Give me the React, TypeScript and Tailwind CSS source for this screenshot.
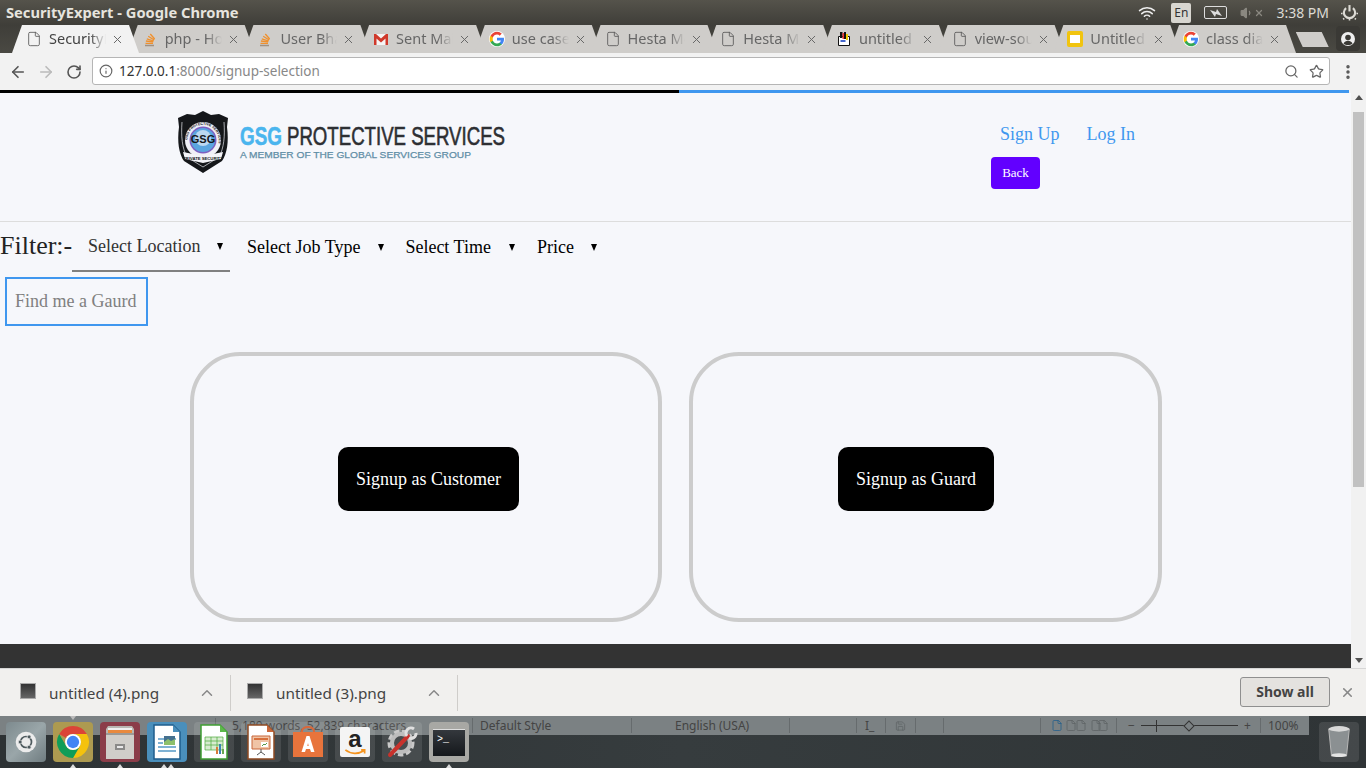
import { ArrowLeft, ArrowRight, ChevronUp, EllipsisVertical, File, Info, RotateCw, Save, Search, Star, Volume1, Wifi, X } from 'lucide-react';
import type { ReactNode } from 'react';

function GoogleIcon() {
  return (
    <div className="w-4 h-4 rounded-full bg-white flex items-center justify-center shrink-0">
      <svg viewBox="0 0 24 24" className="w-4 h-4">
        <path fill="#4285F4" d="M22.5 12.2c0-.8-.1-1.500-.2-2.200H12v4.200h5.900c-.3 1.400-1 2.500-2.200 3.300v2.700h3.500c2.100-1.900 3.300-4.700 3.300-8z" />
        <path fill="#34A853" d="M12 23c3 0 5.400-1 7.200-2.700l-3.500-2.700c-1 .7-2.200 1.100-3.700 1.100-2.800 0-5.300-1.900-6.100-4.500H2.300v2.800C4.100 20.500 7.800 23 12 23z" />
        <path fill="#FBBC05" d="M5.900 14.200c-.2-.7-.3-1.400-.3-2.200s.1-1.500.3-2.200V7H2.300C1.500 8.500 1 10.200 1 12s.5 3.500 1.300 5l3.600-2.800z" />
        <path fill="#EA4335" d="M12 5.400c1.600 0 3 .5 4.100 1.600l3.100-3.100C17.400 2.100 15 1 12 1 7.800 1 4.100 3.500 2.300 7l3.600 2.800c.8-2.600 3.300-4.400 6.100-4.400z" />
      </svg>
    </div>
  );
}

function StackIcon() {
  return (
    <svg viewBox="0 0 16 16" className="w-4 h-4 shrink-0" fill="none" stroke="#f0902c" strokeWidth="1.300">
      <path d="M3 14.500h9" stroke="#a09080" />
      <path d="M3.500 12.300h7.500M3.900 10l7.300.8M4.800 7.800l6.900 2.200M6.200 5.300l6 3.700M8.300 3l4.400 5" />
    </svg>
  );
}

function GmailIcon() {
  return (
    <svg viewBox="0 0 16 16" className="w-4 h-4 shrink-0">
      <path fill="#f4f4f4" d="M1 3h14v11H1z" />
      <path fill="#d0392b" d="M1 3h2l5 4.500L13 3h2v11h-2.500V7.500L8 11.500 3.500 7.500V14H1z" />
    </svg>
  );
}

function PaintIcon() {
  return (
    <svg viewBox="0 0 16 16" className="w-4 h-4 shrink-0">
      <path fill="#fff" stroke="#111" d="M2.500 5.500h11v9h-11z" />
      <path fill="#111" d="M4 1h2.500v6H4zM8 1h2v7H8z" />
      <path fill="#e33" d="M6.500 2h1.500v6H6.500z" />
      <path fill="#ec0" d="M10 3h2v6h-2z" />
      <path fill="#46c" d="M4.500 9h5v2h-5z" />
    </svg>
  );
}

function SlidesIcon() {
  return (
    <div className="w-4 h-4 rounded-[2px] bg-[#f1c40f] flex items-center justify-center shrink-0">
      <div className="w-[10px] h-2 bg-white" />
    </div>
  );
}

const plainFile = <File className="w-4 h-4 shrink-0 text-[#5a5a5a]" strokeWidth={1.3} />;

const tabs: { title: string; icon: ReactNode }[] = [
  { title: 'SecurityExpert', icon: plainFile },
  { title: 'php - How to', icon: <StackIcon /> },
  { title: 'User Bhavior', icon: <StackIcon /> },
  { title: 'Sent Mail', icon: <GmailIcon /> },
  { title: 'use case diagram', icon: <GoogleIcon /> },
  { title: 'Hesta Model', icon: plainFile },
  { title: 'Hesta Model', icon: plainFile },
  { title: 'untitled', icon: <PaintIcon /> },
  { title: 'view-source', icon: plainFile },
  { title: 'Untitled', icon: <SlidesIcon /> },
  { title: 'class diagram', icon: <GoogleIcon /> },
];

function Tab({ title, icon, active }: { title: string; icon: ReactNode; active?: boolean }) {
  return (
    <div
      className={`relative w-[127px] -mr-[11.3px] h-[28px] shrink-0 flex items-center pl-[14px] [clip-path:polygon(10px_0,117px_0,127px_100%,0_100%)] ${
        active ? 'z-10 bg-[#f2f2f2] text-[#444]' : 'bg-[#cfcdca] text-[#666]'
      }`}
    >
      {icon}
      <span className="ml-[7px] w-[57px] overflow-hidden whitespace-nowrap text-[14.500px] [mask-image:linear-gradient(to_right,black_72%,transparent)]">
        {title}
      </span>
      <X className="ml-[5px] w-[13px] h-[13px] text-[#666]" strokeWidth={1.800} />
    </div>
  );
}

function TopBar() {
  return (
    <div className="h-[25px] shrink-0 flex items-center bg-gradient-to-b from-[#55534b] to-[#3f3e39] pl-[6px] text-[#e6e4de]">
      <span className="font-bold text-[14.700px]">SecurityExpert - Google Chrome</span>
      <div className="ml-auto flex items-center pr-[8px]">
        <Wifi className="w-[18px] h-[18px] text-[#eee]" strokeWidth={2} />
        <div className="ml-[15px] w-[20px] h-[20px] bg-[#d8d6d0] rounded-[2px] text-[#333] text-[12px] flex items-center justify-center">En</div>
        <div className="ml-[13px] w-[23px] h-[13px] border border-[#ddd] rounded-[2px] flex items-center justify-center">
          <svg viewBox="0 0 12 8" className="w-[12px] h-[8px]"><path fill="#ddd" d="M0 1l6 2 1-3 5 7-6-2-1 3z" /></svg>
        </div>
        <Volume1 className="ml-[13px] w-[14px] h-[14px] text-[#8a8880]" fill="#8a8880" />
        <X className="w-[10px] h-[10px] text-[#8a8880]" strokeWidth={3} />
        <span className="ml-[12px] text-[14px] text-[#dddbd5]">3:38 PM</span>
        <svg viewBox="0 0 16 16" className="ml-[12px] w-[17px] h-[17px]" fill="none" stroke="#dddbd5" strokeWidth="2">
          <path d="M8 1v6" />
          <path d="M4.800 3.800a5.300 5.300 0 1 0 6.400 0" />
          <path strokeWidth="1.500" d="M8 13.500v2M1.500 9H0M16 9h-1.500M3 13.500l-1 1M13 13.500l1 1" />
        </svg>
      </div>
    </div>
  );
}

function TabStrip() {
  return (
    <div className="h-[28px] shrink-0 flex bg-gradient-to-b from-[#3f3e39] to-[#4a4943] pl-[12px] overflow-hidden">
      {tabs.map((tab, i) => (
        <Tab key={i} title={tab.title} icon={tab.icon} active={i === 0} />
      ))}
      <div className="ml-[11px] mt-[7px] w-[33px] h-[15px] bg-[#cfcdca] [clip-path:polygon(0_0,26px_0,33px_100%,7px_100%)]" />
      <div className="ml-[7px] mt-[1px] w-[24px] h-[25px] rounded-[4px] bg-[#3a3935] flex items-center justify-center">
        <svg viewBox="0 0 16 16" className="w-[16px] h-[16px]">
          <circle cx="8" cy="8" r="7" fill="#eee" />
          <circle cx="8" cy="6.500" r="2.800" fill="#3a3935" />
          <path fill="#3a3935" d="M3.500 12.500c1-2 2.500-2.800 4.500-2.800s3.500.8 4.500 2.800c-1.200 1-2.700 1.500-4.500 1.500s-3.300-.5-4.500-1.500z" />
        </svg>
      </div>
    </div>
  );
}

function Toolbar() {
  return (
    <div className="h-[37px] shrink-0 bg-[#f2f2f2] flex items-center">
      <ArrowLeft className="ml-[9px] w-[18px] h-[18px] text-[#555]" strokeWidth={2.200} />
      <ArrowRight className="ml-[10px] w-[18px] h-[18px] text-[#bbb]" strokeWidth={2.200} />
      <RotateCw className="ml-[11px] w-[16px] h-[16px] text-[#555]" strokeWidth={2.400} />
      <div className="ml-[10px] -mt-[1px] w-[1238px] h-[28px] bg-white border border-[#b5b5b5] rounded-[3px] flex items-center pl-[6px] pr-[5px]">
        <Info className="w-[14px] h-[14px] text-[#666]" strokeWidth={2} />
        <span className="ml-[6px] text-[13.500px] text-[#333]">127.0.0.1</span>
        <span className="text-[13.500px] text-[#888]">:8000/signup-selection</span>
        <Search className="ml-auto w-[15px] h-[15px] text-[#666]" strokeWidth={2} />
        <Star className="ml-[10px] w-[15px] h-[15px] text-[#666]" strokeWidth={2} />
      </div>
      <EllipsisVertical className="ml-[9px] w-[18px] h-[18px] text-[#555]" strokeWidth={2.600} />
    </div>
  );
}

function GsgLogo() {
  const sans = "'Liberation Sans', sans-serif";
  return (
    <svg viewBox="0 0 329 64" className="w-[329px] h-[64px] shrink-0">
      <path fill="#15171a" d="M10 4l8 1 8-4 8 4 8-1 9 4-1 9c2 15 0 27-5 34l-19 12-19-12C2 44 0 32 2 17L1 8z" />
      <path fill="none" stroke="#e6e8ee" strokeWidth="0.700" d="M5 12c-1 14 0 26 5 35l16 10 16-10c5-9 6-21 5-35" />
      <circle cx="26" cy="30" r="18" fill="#f0f0f6" />
      <circle cx="26" cy="30" r="13.500" fill="#7d5fc0" />
      <circle cx="26" cy="30" r="12" fill="#5aa5df" />
      <circle cx="26" cy="28" r="8" fill="#bcd8f0" />
      <defs>
        <path id="gsg-ring" d="M10.500 33a15.700 15.700 0 1 1 31 0" />
      </defs>
      <text fontSize="3.600" fontWeight="700" fill="#15171a" fontFamily={sans}>
        <textPath href="#gsg-ring" startOffset="3">GSG PROTECTIVE SERVICES</textPath>
      </text>
      <text x="26" y="33" textAnchor="middle" fontSize="11" fontWeight="700" fill="#15171a" fontFamily={sans}>GSG</text>
      <path fill="#f4f4f8" d="M6 42l20 4 20-4-2 7-18 4-18-4z" />
      <text x="26" y="50" textAnchor="middle" fontSize="4.200" fontWeight="700" fill="#15171a" fontFamily={sans}>PRIVATE SECURITY</text>
      <text x="63" y="35" fontSize="25" fontWeight="700" stroke="#4ab5ee" strokeWidth="0.500" fill="#4ab5ee" fontFamily={sans} textLength="42" lengthAdjust="spacingAndGlyphs">GSG</text>
      <text x="110" y="35" fontSize="25" fontWeight="400" stroke="#2d2f33" strokeWidth="0.600" fill="#2d2f33" fontFamily={sans} textLength="218" lengthAdjust="spacingAndGlyphs">PROTECTIVE SERVICES</text>
      <text x="63" y="48" fontSize="9.500" fontWeight="400" stroke="#5f8ea6" strokeWidth="0.250" fill="#5f8ea6" fontFamily={sans} textLength="231" lengthAdjust="spacingAndGlyphs">A MEMBER OF THE GLOBAL SERVICES GROUP</text>
    </svg>
  );
}

function Arrow({ className }: { className: string }) {
  return <div className={`w-0 h-0 border-x-[3.500px] border-x-transparent border-t-[7px] border-t-black ${className}`} />;
}

function SignupCard({ label, padded, width }: { label: string; padded: string; width: string }) {
  return (
    <div className={`h-[270px] border-[4px] border-[#cccccc] rounded-[50px] flex items-center justify-center ${width}`}>
      <button className={`h-[64px] -mt-[16px] bg-black text-white rounded-[10px] text-[18px] ${padded}`}>{label}</button>
    </div>
  );
}

function Page() {
  return (
    <div className="flex-1 min-h-0 flex bg-[#f6f7fb] font-['Liberation_Serif',serif]">
      <div className="w-[1351px] flex flex-col">
        <header className="h-[129px] shrink-0 border-b border-[#dddddd] flex pl-[177px] pt-[17px]">
          <GsgLogo />
          <div className="ml-[485px] w-[160px] -mt-[17px] pt-[27px]">
            <div className="ml-[9px] flex gap-[27px] text-[18px] text-[#3f97ef] leading-[28px]">
              <a>Sign Up</a>
              <a>Log In</a>
            </div>
            <button className="mt-[9px] w-[49px] h-[32px] rounded-[4px] bg-[#6200ff] text-white text-[13px]">Back</button>
          </div>
        </header>
        <div className="h-[50px] shrink-0 flex">
          <span className="text-[26px] leading-[48px] text-[#222] w-[72px] whitespace-nowrap">Filter:-</span>
          <div className="w-[158px] border-b-2 border-[#808080] flex items-start pl-[16px] pt-[12px] text-[18px] leading-[24px] text-[#333]">
            Select Location
            <Arrow className="ml-[17px] mt-[9px]" />
          </div>
          <div className="flex items-start pt-[13px] text-[18px] leading-[24px] text-black">
            <span className="ml-[17px]">Select Job Type</span>
            <Arrow className="ml-[18px] mt-[9px]" />
            <span className="ml-[21px]">Select Time</span>
            <Arrow className="ml-[18px] mt-[9px]" />
            <span className="ml-[22px]">Price</span>
            <Arrow className="ml-[17px] mt-[9px]" />
          </div>
        </div>
        <div className="ml-[5px] mt-[5px] w-[143px] h-[49px] shrink-0 border-2 border-[#3f97ef] flex items-center pl-[8px] text-[18px] text-[#808080]">
          Find me a Gaurd
        </div>
        <div className="mt-[26px] ml-[190px] flex gap-[27px]">
          <SignupCard label="Signup as Customer" padded="w-[181px] ml-[5px]" width="w-[472px]" />
          <SignupCard label="Signup as Guard" padded="w-[156px] -ml-[19px]" width="w-[473px]" />
        </div>
        <div className="mt-auto h-[24px] shrink-0 bg-[#333333]" />
      </div>
      <div className="w-[15px] flex flex-col items-center bg-[#f1f1f1]">
        <div className="mt-[2px] w-0 h-0 border-x-[4px] border-x-transparent border-b-[5px] border-b-[#505050]" />
        <div className="mt-[12px] w-[11px] h-[375px] bg-[#c1c1c1]" />
        <div className="mt-auto mb-[5px] w-0 h-0 border-x-[4px] border-x-transparent border-t-[5px] border-t-[#505050]" />
      </div>
    </div>
  );
}

function DownloadItem({ name, width, inset }: { name: string; width: string; inset: string }) {
  return (
    <div className={`h-[36px] flex items-center border-r border-[#cfcdca] ${width} ${inset}`}>
      <div className="w-[16px] h-[16px] border border-[#aaa] bg-gradient-to-b from-[#333] to-[#666] -mt-[4px] shrink-0" />
      <span className="ml-[13px] mt-[2px] w-[149px] text-[15.300px] text-[#444]">{name}</span>
      <ChevronUp className="w-[18px] h-[18px] text-[#888]" strokeWidth={2} />
    </div>
  );
}

function DownloadBar() {
  return (
    <div className="h-[48px] shrink-0 bg-[#f1f0ee] border-t border-[#d6d6d6] flex items-center">
      <DownloadItem name="untitled (4).png" width="w-[231px]" inset="pl-[20px]" />
      <DownloadItem name="untitled (3).png" width="w-[227px]" inset="pl-[16px]" />
      <button className="ml-auto w-[90px] h-[30px] -mt-[2px] bg-[#e4e2df] border border-[#8f8f8f] rounded-[3px] text-[14px] font-bold text-[#444]">
        Show all
      </button>
      <X className="ml-[10px] mr-[11px] w-[15px] h-[15px] text-[#888]" strokeWidth={2.500} />
    </div>
  );
}

function DockTile({ children, dots = 0, marker, className }: { children: ReactNode; dots?: number; marker?: boolean; className?: string }) {
  return (
    <div className={`relative w-[40px] h-[40px] rounded-[4px] flex items-center justify-center ${className ?? 'bg-white/10'}`}>
      {children}
      {marker && <div className="absolute -top-[6px] left-[17px] w-0 h-0 border-x-[3px] border-x-transparent border-t-[4px] border-t-[#bbb]" />}
      {dots > 0 && (
        <div className="absolute -bottom-[6px] left-0 w-full flex justify-center gap-[1px]">
          {Array.from({ length: dots }).map((_, i) => (
            <div key={i} className="w-0 h-0 border-x-[3px] border-x-transparent border-b-[4px] border-b-[#ddd]" />
          ))}
        </div>
      )}
    </div>
  );
}

function Dock() {
  return (
    <div className="relative z-10 flex gap-[7px] pl-[6px] pt-[6px]">
      <DockTile className="bg-gradient-to-br from-[#7d8a8e] via-[#9aa6a9] to-[#6f7c80]">
        <svg viewBox="0 0 32 32" className="w-[22px] h-[22px]">
          <circle cx="16" cy="16" r="15" fill="#ececec" />
          <circle cx="16" cy="16" r="8" fill="none" stroke="#4e5a5e" strokeWidth="2.500" />
          <circle cx="7.500" cy="16" r="2.800" fill="#4e5a5e" stroke="#ececec" />
          <circle cx="20.500" cy="8.500" r="2.800" fill="#4e5a5e" stroke="#ececec" />
          <circle cx="20.500" cy="23.500" r="2.800" fill="#4e5a5e" stroke="#ececec" />
        </svg>
      </DockTile>
      <DockTile dots={1} marker className="bg-[#ad9a50]">
        <svg viewBox="0 0 32 32" className="w-[34px] h-[34px]">
          <path fill="#db4437" d="M16 1A15 15 0 0 1 29 8.500H16A7.500 7.500 0 0 0 9.500 12.250L3 8.500A15 15 0 0 1 16 1z" />
          <path fill="#f4c20d" d="M29 8.500A15 15 0 0 1 16 31L22.500 19.750A7.500 7.500 0 0 0 16 8.500z" />
          <path fill="#0f9d58" d="M16 31A15 15 0 0 1 3 8.500L9.500 19.750A7.500 7.500 0 0 0 22.500 19.750z" />
          <circle cx="16" cy="16" r="7.500" fill="#fff" />
          <circle cx="16" cy="16" r="5.800" fill="#4285f4" />
        </svg>
      </DockTile>
      <DockTile dots={1} className="bg-[#8b3d49]">
        <svg viewBox="0 0 30 33" className="w-[30px] h-[33px]">
          <path fill="#b9b7b2" d="M1 3l2-3h24l2 3v30H1z" />
          <path fill="#efefef" d="M3 2h24v2H3z" />
          <path fill="#e98a3e" d="M3 4h24v3H3z" />
          <path fill="#9c9a96" d="M1 7h28v2H1z" />
          <path fill="#d0cec9" d="M1 9h28v24H1z" />
          <path fill="#8a8a88" d="M10 18h10v6H10z" />
          <path fill="#e8e8e8" d="M12 20h6v2h-6z" />
        </svg>
      </DockTile>
      <DockTile dots={2} className="bg-[#4a8fbc]">
        <svg viewBox="0 0 28 36" className="w-[28px] h-[36px]">
          <path fill="#fff" stroke="#1f5d8c" strokeWidth="1.500" d="M1 1h19l7 7v27H1z" />
          <path fill="#4a8fbc" d="M20 1l7 7h-7z" />
          <path fill="#7fb2d4" d="M5 14h18v2H5zM5 18h5v2H5zM5 22h18v2H5zM5 26h18v2H5z" />
          <path fill="#45708f" d="M11 12h11v9H11z" />
          <path fill="#8ec06c" d="M11 18l4-3 3 2 4-2v6H11z" />
        </svg>
      </DockTile>
      <DockTile>
        <svg viewBox="0 0 28 36" className="w-[28px] h-[36px]">
          <path fill="#fff" stroke="#3f9f33" strokeWidth="1.500" d="M1 1h19l7 7v27H1z" />
          <path fill="#5cb84a" d="M20 1l7 7h-7z" />
          <path fill="#d7ecd0" stroke="#4aa93a" strokeWidth="0.700" d="M5 13h18v13H5z" />
          <path fill="none" stroke="#4aa93a" strokeWidth="0.700" d="M5 17h18M5 21h18M11 13v13M17 13v13" />
          <path fill="#d97a3a" d="M16 23h2v7h-2z" />
          <path fill="#3a83b5" d="M19 20h2v10h-2z" />
          <path fill="#6aa84f" d="M22 25h2v5h-2z" />
        </svg>
      </DockTile>
      <DockTile>
        <svg viewBox="0 0 28 36" className="w-[28px] h-[36px]">
          <path fill="#fff" stroke="#8f4a22" strokeWidth="1.500" d="M1 1h19l7 7v27H1z" />
          <path fill="#c8673a" d="M20 1l7 7h-7z" />
          <path fill="#f0c4a6" stroke="#c8673a" d="M5 12h18v13H5z" />
          <path fill="#d8703c" d="M7 14h14v2H7z" />
          <path fill="#fff" d="M14 18h7v5h-7z" />
          <path fill="none" stroke="#5a9a4a" d="M15 22l2-2 1 1 2-2" />
          <path fill="none" stroke="#555" d="M14 25v3M10 31l4-3 4 3" />
        </svg>
      </DockTile>
      <DockTile>
        <svg viewBox="0 0 32 32" className="w-[32px] h-[32px]">
          <path fill="none" stroke="#d9683a" strokeWidth="2" d="M10 8V5a6 4 0 0 1 12 0v3" />
          <path fill="#e8743c" d="M1 6h30v25H1z" />
          <path fill="#fff" d="M14.500 10h3l5 16h-3.500l-1-3h-4l-1 3H9.500zM15.300 20h1.400l-.7-3z" />
        </svg>
      </DockTile>
      <DockTile>
        <div className="w-[30px] h-[30px] bg-[#f4f4f4] rounded-[2px] flex flex-col items-center justify-center">
          <span className="text-[24px] leading-[20px] font-bold text-[#222] font-['Liberation_Sans',sans-serif]">a</span>
          <svg viewBox="0 0 24 8" className="w-[26px] h-[7px]" fill="none" stroke="#f5941f" strokeWidth="2">
            <path d="M1 1c6 5 15 5 21 1M19 1h4v4" />
          </svg>
        </div>
      </DockTile>
      <DockTile>
        <svg viewBox="0 0 34 34" className="w-[34px] h-[34px]">
          <circle cx="16" cy="18" r="11" fill="none" stroke="#c9c9c9" strokeWidth="5" strokeDasharray="5 2.500" />
          <circle cx="16" cy="18" r="9" fill="none" stroke="#bdbdbd" strokeWidth="4" />
          <path stroke="#c8322c" strokeWidth="4" strokeLinecap="round" d="M5 30L23 11" />
          <path fill="none" stroke="#e0e0e0" strokeWidth="3" d="M22 11a5 5 0 0 1 7-7M24 13a5 5 0 0 0 7-5" />
        </svg>
      </DockTile>
      <DockTile dots={1} className="bg-[#a8a8a4]">
        <div className="w-[32px] h-[27px] bg-gradient-to-b from-[#34383d] to-[#15181c] border-t border-[#ddd] flex items-start pl-[4px] pt-[4px]">
          <span className="text-[10px] leading-[12px] text-white font-['Liberation_Mono',monospace]">&gt;_</span>
        </div>
      </DockTile>
      <div className="ml-auto mr-[7px] w-[40px] h-[40px] rounded-[4px] bg-white/10 flex items-center justify-center">
        <svg viewBox="0 0 32 38" className="w-[30px] h-[36px]">
          <path fill="#8b9092" stroke="#bbb" d="M5 5l3 29h16l3-29z" />
          <ellipse cx="16" cy="5" rx="11" ry="3" fill="#d8d8d8" />
          <ellipse cx="16" cy="33" rx="8" ry="2" fill="#e4e4e4" />
        </svg>
      </div>
    </div>
  );
}

const statusDividers = ['left-[215px]', 'left-[472px]', 'left-[631px]', 'left-[789px]', 'left-[856px]', 'left-[885px]', 'left-[915px]', 'left-[943px]', 'left-[1040px]', 'left-[1116px]', 'left-[1260px]'];

function Desktop() {
  return (
    <div className="relative h-[52px] shrink-0 bg-gradient-to-r from-[#2d3234] via-[#363c3e] to-[#2f3436] overflow-hidden font-['Noto_Sans',sans-serif]">
      {/* writer window's status bar peeking out behind the dock */}
      <div className="absolute left-0 top-0 w-[1309px] h-[19px] bg-[#7b8183] text-[12px] text-[#444] flex items-center">
        {statusDividers.map((left) => (
          <div key={left} className={`absolute ${left} w-[1px] h-[15px] bg-[#666b6d]`} />
        ))}
        <span className="ml-[232px]">5,189 words, 52,839 characters</span>
        <span className="absolute left-[480px]">Default Style</span>
        <span className="absolute left-[675px]">English (USA)</span>
        <span className="absolute left-[865px]">I_</span>
        <Save className="absolute left-[895px] w-[11px] h-[12px] text-[#5c6163]" strokeWidth={1.500} />
        <File className="absolute left-[1051px] w-[12px] h-[13px] text-[#1f5d8c]" strokeWidth={1.500} />
        <File className="absolute left-[1065px] w-[12px] h-[13px] text-[#5c6163]" strokeWidth={1.500} />
        <File className="absolute left-[1075px] w-[12px] h-[13px] text-[#5c6163]" strokeWidth={1.500} />
        <File className="absolute left-[1090px] w-[12px] h-[13px] text-[#5c6163]" strokeWidth={1.500} />
        <File className="absolute left-[1097px] w-[12px] h-[13px] text-[#5c6163]" strokeWidth={1.500} />
        <div className="absolute left-[1141px] w-[97px] h-[1px] bg-[#333]" />
        <div className="absolute left-[1156px] w-[1px] h-[12px] bg-[#333]" />
        <div className="absolute left-[1185px] w-[8px] h-[8px] rotate-45 border border-[#333] bg-[#7b8183]" />
        <span className="absolute left-[1128px]">−</span>
        <span className="absolute left-[1244px]">+</span>
        <span className="absolute left-[1268px]">100%</span>
      </div>
      <Dock />
    </div>
  );
}

export default function App() {
  return (
    <div className="w-[1366px] h-[768px] overflow-hidden flex flex-col font-['Noto_Sans',sans-serif]">
      <TopBar />
      <TabStrip />
      <Toolbar />
      <div className="h-[3px] shrink-0 flex">
        <div className="w-[679px] bg-black" />
        <div className="w-[670px] bg-[#3f97ef]" />
        <div className="flex-1 bg-[#f1f1f1]" />
      </div>
      <Page />
      <DownloadBar />
      <Desktop />
    </div>
  );
}
